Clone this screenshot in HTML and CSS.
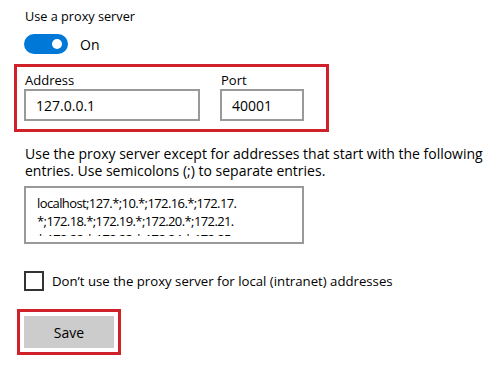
FILE: index.html
```html
<!DOCTYPE html>
<html lang="en">
<head>
  <meta charset="UTF-8" />
  <title>Proxy settings</title>
  <link rel="stylesheet" href="styles.css">
</head>
<body>
  <div class="proxy-panel">
    <div class="setting-title">Use a proxy server</div>

    <div class="toggle-row">
      <span class="toggle"><span class="toggle-knob"></span></span>
      <span class="toggle-label">On</span>
    </div>

    <div class="highlight address-group">
      <div class="field field-address">
        <div class="field-label">Address</div>
        <div class="text-input">127.0.0.1</div>
      </div>
      <div class="field field-port">
        <div class="field-label">Port</div>
        <div class="text-input">40001</div>
      </div>
    </div>

    <div class="description">Use the proxy server except for addresses that start with the following entries. Use semicolons (;) to separate entries.</div>

    <div class="text-area">
      <div class="text-area-scroll">
        <div class="text-area-line">localhost;127.*;10.*;172.16.*;172.17.</div>
        <div class="text-area-line">*;172.18.*;172.19.*;172.20.*;172.21.</div>
        <div class="text-area-line">*;172.22.*;172.23.*;172.24.*;172.25.</div>
      </div>
    </div>

    <div class="check-row">
      <span class="checkbox"></span>
      <span class="check-label">Don’t use the proxy server for local (intranet) addresses</span>
    </div>

    <div class="highlight save-group">
      <div class="button">Save</div>
    </div>
  </div>
</body>
</html>
```

FILE: styles.css
```css
body {
  margin: 0;
  background-color: #ffffff;
  color: #000000;
  font-family: 'Open Sans', 'Noto Sans', sans-serif;
  font-size: 13px;
}

.proxy-panel {
  padding: 6px 0 0 24px;
}

.setting-title {
  line-height: 20px;
  padding-left: 1px;
  font-size: 12.7px;
}

/* toggle switch */

.toggle-row {
  display: flex;
  align-items: center;
  margin-top: 8px;
}

.toggle {
  width: 44px;
  height: 20px;
  border-radius: 10px;
  background-color: #0078d7;
  display: flex;
  align-items: center;
  justify-content: flex-end;
  padding-right: 6px;
  box-sizing: border-box;
}

.toggle-knob {
  width: 10px;
  height: 10px;
  border-radius: 50%;
  background-color: #ffffff;
}

.toggle-label {
  margin-left: 12px;
  font-size: 14px;
}

/* red highlight boxes */

.highlight {
  border: 3px solid #d0202a;
  box-sizing: border-box;
}

.address-group {
  margin: 10px 0 0 -10px;
  width: 315px;
  height: 68px;
  padding: 4px 0 0 7px;
  display: flex;
  gap: 20px;
}

.field-label {
  line-height: 18px;
  padding-left: 1px;
}

.text-input {
  height: 32px;
  border: 2px solid #999999;
  box-sizing: border-box;
  padding: 0 10px;
  display: flex;
  align-items: center;
  font-size: 14px;
}

.field-address .text-input {
  width: 176px;
}

.field-port .text-input {
  width: 84px;
}

/* exceptions list */

.description {
  margin-top: 13px;
  width: 472px;
  line-height: 17px;
  padding-left: 1px;
  font-size: 14px;
}

.text-area {
  margin-top: 7px;
  width: 280px;
  height: 58px;
  border: 2px solid #999999;
  box-sizing: border-box;
  padding: 6px 10px 0 11px;
  line-height: 18px;
  letter-spacing: -0.6px;
}

.text-area-scroll {
  height: 42px;
  overflow: hidden;
}

.text-area-line {
  white-space: nowrap;
}

/* checkbox */

.check-row {
  display: flex;
  align-items: center;
  margin-top: 27px;
}

.checkbox {
  width: 20px;
  height: 20px;
  border: 2px solid #333333;
  box-sizing: border-box;
}

.check-label {
  margin-left: 8px;
  font-size: 13.2px;
}

/* save button */

.save-group {
  margin: 18px 0 0 -7px;
  width: 104px;
  padding: 4px;
}

.button {
  height: 32px;
  background-color: #cccccc;
  display: flex;
  align-items: center;
  justify-content: center;
  font-size: 14px;
}
```
